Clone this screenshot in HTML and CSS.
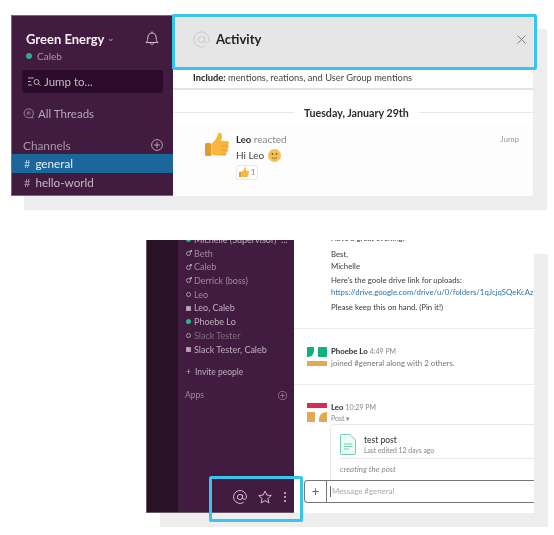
FILE: index.html
```html
<!DOCTYPE html>
<html lang="en">
<head>
    <meta charset="UTF-8">
    <meta name="viewport" content="width=device-width, initial-scale=1.0">
    <title>Activity</title>
    <link rel="stylesheet" href="styles.css">
</head>
<body>
    <!-- top screenshot -->
    <div class="shot shot-top">
        <div class="side">
            <div class="team-row">
                <div>
                    <div class="team">Green Energy <span class="chev">&#8964;</span></div>
                    <div class="me"><span class="dot"></span>Caleb</div>
                </div>
                <svg class="bell" viewBox="0 0 14 15" fill="none" stroke="#cfc3cd" stroke-width="1">
                    <path d="M1 11.500c1.300-1 1.800-2.500 1.800-4.500 0-3 1.700-5 4.200-5s4.200 2 4.200 5c0 2 .5 3.500 1.800 4.500z"/>
                    <path d="M5.500 12c0 2 3 2 3 0"/>
                    <path d="M7 .5v1.500"/>
                </svg>
            </div>
            <div class="jump">
                <svg class="jump-icon" viewBox="0 0 13 9" fill="none" stroke="#c8bcc6" stroke-width=".9">
                    <path d="M0 1h6M0 4.500h3M0 8h4"/>
                    <circle cx="8.500" cy="5" r="2.500"/>
                    <path d="M10.500 7l2 1.500"/>
                </svg>
                Jump to...
            </div>
            <div class="threads">
                <svg class="threads-icon" viewBox="0 0 12 12" fill="none" stroke="#a898a6" stroke-width=".9">
                    <path d="M6 1a4.800 4.800 0 1 0 0 9.600h5l-1-1.500a4.800 4.800 0 0 0-4-8.100z"/>
                    <path d="M4 4.500h4M4 6.500h4"/>
                </svg>
                All Threads
            </div>
            <div class="channels-head">
                <span>Channels</span>
                <svg class="add" viewBox="0 0 12 12" fill="none" stroke="#bdb0bb" stroke-width=".9">
                    <circle cx="6" cy="6" r="5.400"/>
                    <path d="M6 3v6M3 6h6"/>
                </svg>
            </div>
            <div class="channel active"><span class="hash">#</span>general</div>
            <div class="channel"><span class="hash">#</span>hello-world</div>
        </div>
        <div class="activity">
            <div class="head">
                <svg class="at-icon" viewBox="0 0 18 18" fill="none" stroke="#c9c6ca" stroke-width="1">
                    <circle cx="9" cy="9" r="3.200"/>
                    <path d="M12.200 6v4.500c0 2.500 4.800 2.500 4.800-1.500a8 8 0 1 0-3.500 6.600"/>
                </svg>
                <span class="head-title">Activity</span>
                <svg class="close" viewBox="0 0 9 9" fill="none" stroke="#777" stroke-width=".9">
                    <path d="M.5.5l8 8M8.500.5l-8 8"/>
                </svg>
            </div>
            <div class="include"><b>Include:</b> mentions, reations, and User Group mentions</div>
            <div class="date-row"><span>Tuesday, January 29th</span></div>
            <div class="reacted">
                <svg class="thumb" viewBox="0 0 24 26">
                    <path fill="#f6b73c" d="M7 11c3-2 5-5 6-9 .4-2 4-2 4 2 0 2-.6 4-1.200 5H22c2.400 0 2.400 3.600.8 4 1.600 1 1 3.600-.5 4 1 1.200.4 3.200-1 3.500.6 1.400-.2 3-2 3H11c-2 0-3-1-4-1z"/>
                    <rect fill="#e39a2f" x="0" y="11" width="6.500" height="13" rx="1.500"/>
                    <path fill="none" stroke="#e39a2f" stroke-width=".8" d="M16 14h7M16 18.500h6.500M16 22.500h5"/>
                </svg>
                <div class="react-body">
                    <div><b class="who">Leo</b> <span class="muted">reacted</span></div>
                    <div class="hi">Hi Leo
                        <svg class="smile" viewBox="0 0 13 13">
                            <circle cx="6.500" cy="6.500" r="6.500" fill="#f5c04f"/>
                            <circle cx="4.500" cy="5" r=".9" fill="#7a5a20"/>
                            <circle cx="8.500" cy="5" r=".9" fill="#7a5a20"/>
                            <path d="M4 8.500c1.500 1.200 3.500 1.200 5 0" fill="none" stroke="#7a5a20" stroke-width=".8"/>
                        </svg>
                    </div>
                    <div class="pill">
                        <svg class="pill-thumb" viewBox="0 0 24 26">
                            <path fill="#f6b73c" d="M7 11c3-2 5-5 6-9 .4-2 4-2 4 2 0 2-.6 4-1.200 5H22c2.400 0 2.400 3.600.8 4 1.600 1 1 3.600-.5 4 1 1.200.4 3.200-1 3.500.6 1.400-.2 3-2 3H11c-2 0-3-1-4-1z"/>
                            <rect fill="#e39a2f" x="0" y="11" width="6.500" height="13" rx="1.500"/>
                        </svg>
                        1
                    </div>
                </div>
                <span class="jump-link">Jump</span>
            </div>
        </div>
        <div class="highlight highlight-head"></div>
    </div>

    <!-- bottom screenshot -->
    <div class="shot shot-bottom">
        <div class="rail"></div>
        <div class="side2">
            <ul class="dms">
                <li class="cut"><span class="pres on"></span>Michelle (Supervisor) &nbsp;...</li>
                <li><span class="pres ring tail"></span>Beth</li>
                <li><span class="pres ring tail"></span>Caleb</li>
                <li><span class="pres ring tail"></span>Derrick (boss)</li>
                <li><span class="pres ring"></span>Leo</li>
                <li class="bright"><span class="pres box"></span>Leo, Caleb</li>
                <li class="bright"><span class="pres on"></span>Phoebe Lo</li>
                <li class="dim"><span class="pres ring"></span>Slack Tester</li>
                <li class="bright"><span class="pres box"></span>Slack Tester, Caleb</li>
            </ul>
            <div class="invite"><span class="plus">+</span>Invite people</div>
            <div class="apps">
                <span>Apps</span>
                <svg class="add-small" viewBox="0 0 12 12" fill="none" stroke="#a897a6" stroke-width=".9">
                    <circle cx="6" cy="6" r="5.400"/>
                    <path d="M6 3v6M3 6h6"/>
                </svg>
            </div>
            <div class="tools">
                <svg class="tool" viewBox="0 0 14 14" fill="none" stroke="#d8ced6" stroke-width=".9">
                    <circle cx="7" cy="7" r="2.600"/>
                    <path d="M9.600 4.500v3.500c0 2 3.900 2 3.900-1a6.500 6.500 0 1 0-2.800 5.300"/>
                </svg>
                <svg class="tool" viewBox="0 0 14 14" fill="none" stroke="#d8ced6" stroke-width=".9">
                    <path d="M7 1l1.800 4.100 4.500.4-3.400 3 1 4.400L7 10.600l-3.900 2.300 1-4.400-3.400-3 4.500-.4z"/>
                </svg>
                <span class="dots"><i></i><i></i><i></i></span>
            </div>
        </div>
        <div class="chat">
            <div class="log">
                <div class="msg-text">
                    <p class="cut-line">Have a great evening!</p>
                    <p class="sign">Best,<br>Michelle</p>
                    <p class="drive">Here's the goole drive link for uploads:<br><span class="link">https://drive.google.com/drive/u/0/folders/1qJcjqSQeKcAz</span></p>
                    <p class="keep">Please keep this on hand. (Pin it!)</p>
                </div>
                <div class="msg msg-phoebe">
                    <svg class="avatar" viewBox="0 0 20 20">
                        <path fill="#10b07f" d="M0 0h7v4a6 6 0 0 1-6 6H0z"/>
                        <rect fill="#10b07f" x="11" y="0" width="9" height="10" rx="1"/>
                        <rect fill="#e2a856" x="0" y="14" width="20" height="5"/>
                    </svg>
                    <div class="msg-body">
                        <div class="msg-head"><b>Phoebe Lo</b> <span class="time">4:49 PM</span></div>
                        <div class="joined">joined #general along with 2 others.</div>
                    </div>
                </div>
                <div class="msg msg-leo">
                    <svg class="avatar" viewBox="0 0 20 20">
                        <rect fill="#d62b5b" x="0" y="0" width="20" height="5"/>
                        <rect fill="#e2a856" x="0" y="9" width="8" height="10"/>
                        <path fill="#e2a856" d="M12 19v-3a7 7 0 0 1 7-7h1v10z"/>
                    </svg>
                    <div class="msg-body">
                        <div class="msg-head"><b>Leo</b> <span class="time">10:29 PM</span></div>
                        <div class="post-label">Post &#9662;</div>
                        <div class="card">
                            <div class="card-top">
                                <svg class="doc" viewBox="0 0 16 21" fill="#eefaf6" stroke="#6fcfb0" stroke-width="1">
                                    <path d="M1.500.5h8.500l5.500 5.500v13a1.500 1.500 0 0 1-1.500 1.500H1.500A1 1 0 0 1 .5 19.500V1.500a1 1 0 0 1 1-1z"/>
                                    <path d="M4 10h8.500M4 12.500h8.500M4 15h5" fill="none"/>
                                </svg>
                                <div>
                                    <div class="post-title">test post</div>
                                    <div class="post-meta">Last edited 12 days ago</div>
                                </div>
                            </div>
                            <div class="post-body">creating the post</div>
                        </div>
                    </div>
                </div>
            </div>
            <div class="composer">
                <span class="composer-add">+</span>
                <span class="composer-text">Message #general</span>
            </div>
        </div>
        <div class="highlight highlight-tools"></div>
    </div>
</body>
</html>
```

FILE: styles.css
```css
* { box-sizing: border-box; }
body { margin: 0; min-height: 535px; background: #fff; font-family: Lato, "Open Sans", sans-serif; color: #2c2d30; }
p { margin: 0; }

.shot { position: relative; display: flex; filter: blur(.35px); }
.shot-top { width: 523px; height: 181px; margin: 15px 0 0 11px; box-shadow: 13px 14px 0 #eeeeee; background: #fff; }
.shot-bottom { width: 388px; height: 273px; margin: 44px 0 0 146px; box-shadow: 14px 14px 0 #eeeeee; background: #fff; }

.highlight { position: absolute; border: 3px solid #37c5f0; border-radius: 2px; }
.highlight-head { left: 161px; top: -1px; width: 365px; height: 56px; }
.highlight-tools { left: 63px; top: 236px; width: 94px; height: 46px; }

/* top sidebar */
.side { width: 162px; background: #421b40; border: 1px solid #7b6a7c; border-right: 0; color: #fff; display: flex; flex-direction: column; }
.team-row { display: flex; justify-content: space-between; padding: 14px 14px 0 14px; height: 54px; }
.team { font-size: 13px; font-weight: 700; line-height: 18px; color: #f4eff3; white-space: nowrap; }
.chev { font-size: 9px; font-weight: 400; color: #b5a8b3; position: relative; top: -3px; }
.me { font-size: 10px; color: #a898a6; line-height: 14px; margin-top: -1px; display: flex; align-items: center; }
.dot { width: 6px; height: 6px; border-radius: 50%; background: #2fa98a; margin: 0 5px 0 0; }
.bell { width: 14px; height: 15px; margin-top: 1px; }
.jump { margin: 0 10px; height: 23px; background: #2b0a2c; border-radius: 3px; color: #c4b8c2; font-size: 11.5px; display: flex; align-items: center; padding-left: 6px; }
.jump-icon { width: 13px; height: 9px; margin-right: 3px; }
.threads { display: flex; align-items: center; font-size: 11.5px; color: #b5a8b3; padding-left: 11px; margin-top: 11px; height: 18px; }
.threads-icon { width: 11px; height: 11px; margin-right: 4px; }
.channels-head { display: flex; justify-content: space-between; align-items: center; font-size: 11.8px; color: #a898a6; padding: 0 10px 0 11px; margin-top: 14px; height: 18px; }
.add { width: 12px; height: 12px; }
.channel { height: 19px; line-height: 19px; font-size: 11.7px; color: #c4b8c2; padding-left: 12px; }
.channel.active { background: #1b669b; color: #e8f0f5; }
.hash { color: #a898a6; margin-right: 5px; font-size: 11px; }
.channel.active .hash { color: #b7cfe0; }

/* activity pane */
.activity { flex: 1; background: #fff; border-right: 1px solid #eeeeee; display: flex; flex-direction: column; }
.head { height: 55px; background: #e6e6e6; display: flex; align-items: center; padding: 0 7px 7px 20px; }
.at-icon { width: 17px; height: 17px; margin-right: 6px; }
.head-title { font-size: 13px; font-weight: 700; color: #222; flex: 1; }
.close { width: 9px; height: 9px; }
.include { height: 20px; border-bottom: 2px solid #e2e2e2; font-size: 9.3px; line-height: 16px; padding-left: 20px; color: #444; }
.include b { color: #222; }
.date-row { display: flex; align-items: center; justify-content: center; gap: 10px; height: 22px; margin-top: 11px; font-size: 10.7px; font-weight: 700; color: #2c2d30; }
.date-row::before { content: ""; flex: 1.06; height: 1px; background: #e8e8e8; }
.date-row::after { content: ""; flex: 1; height: 1px; background: #e8e8e8; }
.reacted { display: flex; padding: 9px 14px 0 32px; background: #fdfdfd; flex: 1; }
.thumb { width: 24px; height: 26px; }
.react-body { flex: 1; padding-left: 7px; font-size: 10px; line-height: 15px; color: #444; }
.who { font-size: 9.5px; color: #2c2d30; }
.muted { color: #888; }
.hi { display: flex; align-items: center; gap: 4px; height: 16px; }
.smile { width: 13px; height: 13px; }
.pill { width: 22px; height: 15px; margin-top: 2px; border: 1px solid #e8e8e8; border-radius: 3px; display: flex; align-items: center; justify-content: center; gap: 2px; font-size: 8px; color: #888; }
.pill-thumb { width: 10px; height: 11px; }
.jump-link { font-size: 8px; color: #999; margin-top: 2px; }

/* bottom sidebar */
.rail { width: 32px; background: #2a1226; border-left: 1px solid #6a586b; border-bottom: 1px solid #6a586b; }
.side2 { width: 116px; background: #421b40; border-bottom: 1px solid #6a586b; display: flex; flex-direction: column; color: #9c8c9a; font-size: 9px; overflow: hidden; }
.dms { list-style: none; margin: -7px 0 0 0; padding: 0 0 0 8px; }
.dms li { height: 13.7px; line-height: 13.7px; display: flex; align-items: center; white-space: nowrap; }
.dms .bright { color: #bdb0bb; }
.dms .dim { color: #7f6d7d; }
.dms .cut { color: #bdb0bb; }
.pres { width: 5px; height: 5px; margin-right: 3px; flex: none; border-radius: 50%; position: relative; }
.pres.ring { border: 1px solid #a898a6; }
.pres.tail::after { content: ""; position: absolute; right: -2px; top: -2px; width: 2px; height: 2px; background: #a898a6; }
.pres.on { background: #2fb58e; }
.pres.box { border-radius: 1px; background: #c4b8c2; box-shadow: inset 0 0 0 1.500px #a898a6; }
.invite { margin-top: 9px; padding-left: 8px; color: #bdb0bb; height: 14px; line-height: 14px; font-size: 8.5px; }
.plus { margin-right: 4px; }
.apps { display: flex; justify-content: space-between; align-items: center; padding: 0 7px 0 7px; margin-top: 9px; height: 14px; font-size: 8.5px; }
.add-small { width: 9px; height: 9px; }
.tools { margin-top: auto; height: 30px; display: flex; align-items: center; padding: 0 0 0 55px; }
.tool { width: 14px; height: 14px; margin-right: 11px; }
.dots { display: flex; flex-direction: column; gap: 2px; margin-left: 1px; }
.dots i { width: 2px; height: 2px; background: #d8ced6; border-radius: 50%; }

/* chat */
.chat { flex: 1; min-width: 0; display: flex; flex-direction: column; background: #fff; overflow: hidden; }
.log { height: 240px; overflow: hidden; }
.msg-text { display: flow-root; padding-left: 37px; font-size: 7.8px; line-height: 12px; color: #3a3a3d; white-space: nowrap; border-bottom: 1px solid #ececec; height: 89px; }
.cut-line { margin-top: -8px; }
.sign { margin-top: 4px; }
.drive { margin-top: 2px; }
.keep { margin-top: 3px; }
.link { color: #2a74ad; }
.msg { display: flex; padding-left: 13px; gap: 4px; }
.msg-phoebe { height: 56px; padding-top: 18px; border-bottom: 1px solid #ececec; }
.msg-leo { padding-top: 18px; }
.avatar { width: 20px; height: 20px; flex: none; }
.msg-body { flex: 1; min-width: 0; margin-top: -2px; }
.msg-head { font-size: 7.8px; line-height: 12px; white-space: nowrap; }
.msg-head b { color: #2c2d30; }
.time { font-size: 7px; color: #888; }
.joined { font-size: 7.9px; line-height: 12px; color: #777; white-space: nowrap; }
.post-label { font-size: 7px; line-height: 10px; color: #888; }
.card { margin: 1px 0 0 -1px; height: 70px; border: 1px solid #e8e8e8; border-right: 0; border-radius: 4px 0 0 0; padding: 9px 0 0 9px; }
.card-top { display: flex; gap: 8px; height: 25px; border-bottom: 1px solid #e8e8e8; }
.doc { width: 16px; height: 21px; flex: none; }
.post-title { font-size: 8.5px; line-height: 12px; color: #2c2d30; }
.post-meta { font-size: 6.8px; line-height: 9px; color: #888; }
.post-body { font-size: 8px; line-height: 10px; font-style: italic; color: #888; margin-top: 5px; }
.composer { height: 23px; border: 1px solid #777; border-right: 0; border-radius: 4px 0 0 4px; margin-left: 10px; display: flex; align-items: center; background: #fff; }
.composer-add { width: 22px; height: 100%; border-right: 1px solid #777; text-align: center; font-size: 13px; line-height: 20px; color: #666; }
.composer-text { font-size: 7.9px; color: #aaa; padding-left: 1px; border-left: 1px solid #666; margin-left: 3px; line-height: 11px; }
```
